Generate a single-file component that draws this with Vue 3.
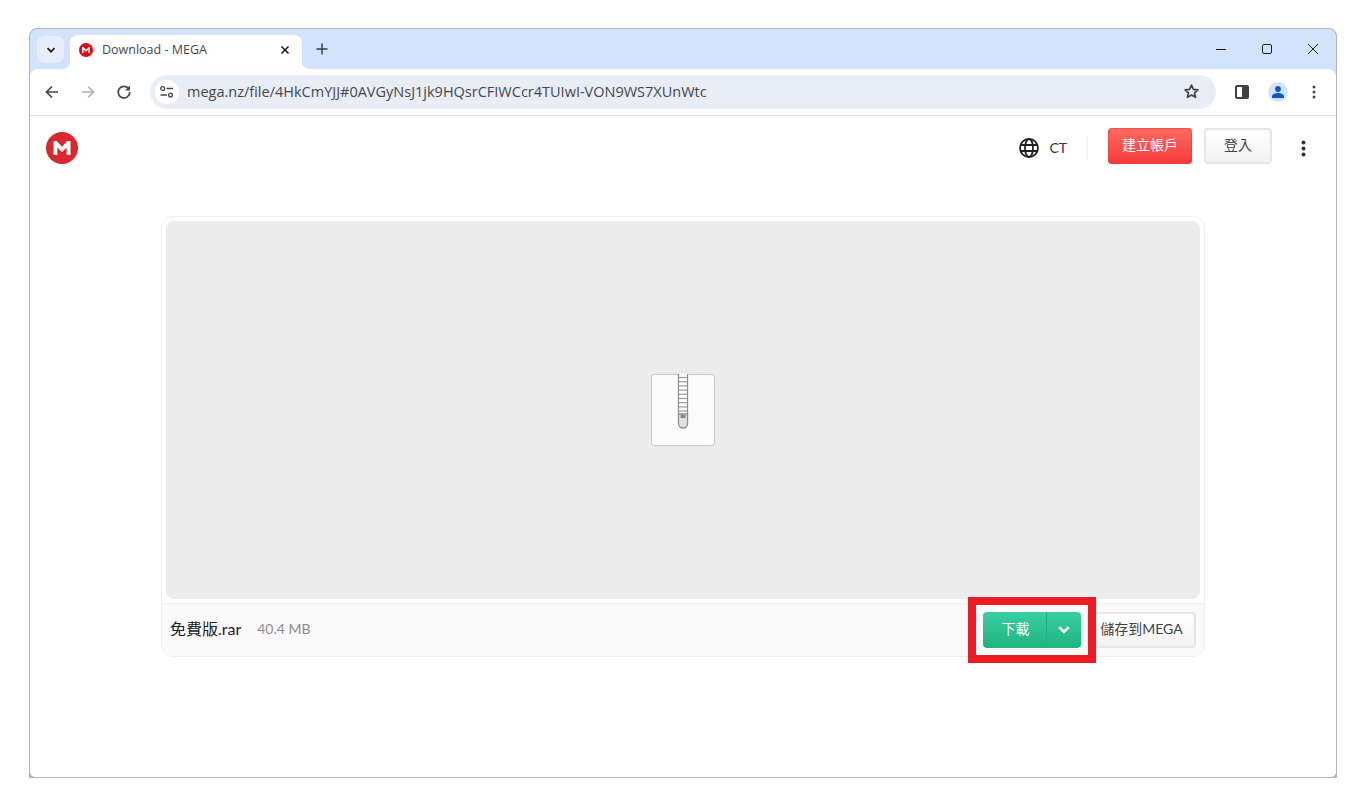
<script setup>
const fileName = '免費版.rar'
const fileSize = '40.4 MB'
const rungs = Array.from({ length: 9 }, (_, i) => 3.5 + i * 4.2)
</script>

<template>
  <div class="page">
    <div class="window">
      <div class="tabstrip">
        <button class="tabsearch">
          <svg width="12" height="12" viewBox="0 0 12 12"><path d="M2.5 4.2 6 7.7l3.5-3.5" fill="none" stroke="#1f1f1f" stroke-width="1.7"/></svg>
        </button>
        <div class="tab">
          <svg class="favicon" width="14" height="14" viewBox="0 0 32 32"><circle cx="16" cy="16" r="16" fill="#e30613"/><path d="M7 23V9h3l6 6.400L22 9h3v14h-3.700v-8l-4.400 4.600h-1.800L10.700 15v8z" fill="#fff"/></svg>
          <span class="tabtitle">Download - MEGA</span>
          <svg class="tabclose" width="10" height="10" viewBox="0 0 10 10"><path d="M1.5 1.5l7 7M8.5 1.5l-7 7" stroke="#1f1f1f" stroke-width="1.6"/></svg>
        </div>
        <svg class="newtab" width="12" height="12" viewBox="0 0 12 12"><path d="M6 .5v11M.5 6h11" stroke="#3c3c3c" stroke-width="1.5"/></svg>
        <div class="wincontrols">
          <svg width="46" height="12" viewBox="0 0 46 12"><path d="M18 6.500h10" stroke="#1f1f1f" stroke-width="1"/></svg>
          <svg width="46" height="12" viewBox="0 0 46 12"><rect x="18.500" y="1.500" width="9" height="9" rx="1.500" fill="none" stroke="#1f1f1f"/></svg>
          <svg width="46" height="12" viewBox="0 0 46 12"><path d="M18 1l10 10M28 1L18 11" stroke="#1f1f1f" stroke-width="1"/></svg>
        </div>
      </div>

      <div class="toolbar-back">
        <div class="toolbar">
          <button class="tool">
            <svg width="16" height="16" viewBox="0 0 16 16"><path d="M14 8H3M8 2.500 2.500 8 8 13.500" fill="none" stroke="#444746" stroke-width="1.700"/></svg>
          </button>
          <button class="tool">
            <svg width="16" height="16" viewBox="0 0 16 16"><path d="M2 8h11M8 2.500 13.500 8 8 13.500" fill="none" stroke="#aeb0b1" stroke-width="1.700"/></svg>
          </button>
          <button class="tool">
            <svg width="16" height="16" viewBox="0 0 16 16"><path d="M13 5.200A5.800 5.800 0 1 0 13.800 8" fill="none" stroke="#444746" stroke-width="1.700"/><path d="M14 1.500v5h-5z" fill="#444746"/></svg>
          </button>
          <div class="omnibox">
            <span class="tune">
              <svg width="16" height="14" viewBox="0 0 16 14"><circle cx="3.700" cy="3.500" r="1.900" fill="none" stroke="#444746" stroke-width="1.300"/><path d="M7.500 3.500H14M1.500 10H8" stroke="#444746" stroke-width="1.500"/><circle cx="11.500" cy="10" r="1.900" fill="none" stroke="#444746" stroke-width="1.300"/></svg>
            </span>
            <span class="url">mega.nz/file/4HkCmYJJ#0AVGyNsJ1jk9HQsrCFIWCcr4TUIwI-VON9WS7XUnWtc</span>
            <svg class="star" width="17" height="17" viewBox="0 0 24 24"><path d="M12 3l2.700 5.900 6.400.7-4.800 4.300 1.400 6.300L12 17l-5.700 3.200 1.400-6.300-4.800-4.300 6.400-.7z" fill="none" stroke="#444746" stroke-width="2.500" stroke-linejoin="round"/></svg>
          </div>
          <button class="tool first-right">
            <svg width="16" height="16" viewBox="0 0 16 16"><rect x="2" y="2" width="12" height="12" rx="1.500" fill="#fff" stroke="#3c4043" stroke-width="2"/><rect x="8" y="1.500" width="6.500" height="13" fill="#3c4043"/></svg>
          </button>
          <button class="tool">
            <span class="avatar">
              <svg width="14" height="14" viewBox="0 0 14 14"><circle cx="7" cy="4" r="2.900" fill="#0b57d0"/><path d="M1 13v-1.500C1 9.300 4 8 7 8s6 1.300 6 3.500V13z" fill="#0b57d0"/></svg>
            </span>
          </button>
          <button class="tool">
            <svg width="4" height="14" viewBox="0 0 4 14"><circle cx="2" cy="2" r="1.500" fill="#444746"/><circle cx="2" cy="7" r="1.500" fill="#444746"/><circle cx="2" cy="12" r="1.500" fill="#444746"/></svg>
          </button>
        </div>
      </div>

      <div class="content">
        <header class="sitebar">
          <svg class="logo" width="32" height="32" viewBox="0 0 32 32"><circle cx="16" cy="16" r="16" fill="#d9272e"/><path d="M7.500 23V9h3.200l5.300 5.800L21.300 9h3.200v14h-3.900v-7.600L16.800 19.500h-1.600l-3.800-4.100V23z" fill="#fff"/></svg>
          <div class="spacer"></div>
          <svg class="globe" width="22" height="22" viewBox="0 0 22 22" fill="none" stroke="#222" stroke-width="1.800"><circle cx="11" cy="11" r="9"/><ellipse cx="11" cy="11" rx="4" ry="9"/><path d="M2.500 8h17M2.500 14h17"/></svg>
          <span class="lang">CT</span>
          <span class="vsep"></span>
          <button class="btn red">建立帳戶</button>
          <button class="btn plain login">登入</button>
          <svg class="sitemenu" width="5" height="17" viewBox="0 0 5 17"><circle cx="2.500" cy="2.500" r="2" fill="#333"/><circle cx="2.500" cy="8.500" r="2" fill="#333"/><circle cx="2.500" cy="14.500" r="2" fill="#333"/></svg>
        </header>

        <main class="card">
          <div class="preview">
            <svg width="64" height="72" viewBox="0 0 64 72">
              <rect x=".5" y=".5" width="63" height="71" rx="3" fill="#fbfbfb" stroke="#c8c8c8"/>
              <rect x="27.500" y="-2" width="9" height="44" fill="#fff" stroke="#8e8e8e" stroke-width="1.200"/>
              <path v-for="y in rungs" :key="y" :d="`M28 ${y}h8`" stroke="#9a9a9a" stroke-width="1.200"/>
              <path d="M27.500 40v9.500a4.500 4.500 0 0 0 9 0V40z" fill="#e2e2e2" stroke="#8e8e8e" stroke-width="1.300"/>
              <rect x="29.500" y="41" width="5" height="3" fill="#8a8a8a"/>
            </svg>
          </div>
          <div class="filebar">
            <span class="name">{{ fileName }}</span>
            <span class="size">{{ fileSize }}</span>
            <div class="spacer"></div>
            <div class="download">
              <span class="dl-label">下載</span>
              <span class="dl-arrow">
                <svg width="12" height="8" viewBox="0 0 12 8"><path d="M1.200 1.200 6 6l4.800-4.800" fill="none" stroke="#fff" stroke-width="2.500"/></svg>
              </span>
            </div>
            <button class="btn plain save">儲存到MEGA</button>
          </div>
        </main>
      </div>
    </div>
    <div class="highlight"></div>
  </div>
</template>

<style>
html, body { margin: 0; background: #fff; }
</style>

<style scoped>
.page {
  position: relative;
  width: 1366px;
  height: 806px;
  padding: 28px 29px;
  box-sizing: border-box;
  overflow: hidden;
}
.window {
  height: 750px;
  box-sizing: border-box;
  border: 1px solid #b4b4b4;
  border-radius: 8px 8px 0 0;
  background: #b4b4b4;
  display: flex;
  flex-direction: column;
  overflow: hidden;
}
button {
  border: 0;
  background: none;
  padding: 0;
  margin: 0;
  font: inherit;
}
.tabstrip {
  height: 40px;
  flex: none;
  background: #d3e3fd;
  display: flex;
  align-items: flex-end;
  padding-left: 7px;
}
.tabsearch {
  width: 27px;
  height: 27px;
  margin-bottom: 6px;
  border-radius: 8px;
  background: #e6eefb;
  display: flex;
  align-items: center;
  justify-content: center;
}
.tab {
  width: 232px;
  height: 34px;
  margin-left: 6px;
  background: #fff;
  border-radius: 8px 8px 0 0;
  display: flex;
  align-items: center;
  box-sizing: border-box;
  padding: 0 12px 5px 9px;
  position: relative;
}
.tab::before,
.tab::after {
  content: "";
  position: absolute;
  bottom: 0;
  width: 8px;
  height: 8px;
}
.tab::before {
  left: -8px;
  background: radial-gradient(circle at 0 0, #d3e3fd 8px, #fff 8.5px);
}
.tab::after {
  right: -8px;
  background: radial-gradient(circle at 100% 0, #d3e3fd 8px, #fff 8.5px);
}
.favicon { flex: none; }
.tabtitle {
  margin-left: 9px;
  flex: 1;
  font: 12.5px/16px "Open Sans", "Noto Sans", sans-serif;
  color: #45484c;
}
.tabclose { flex: none; }
.newtab { margin: 0 0 14px 14px; flex: none; }
.wincontrols {
  margin-left: auto;
  display: flex;
  align-self: flex-start;
  padding-top: 14px;
}
.toolbar-back {
  flex: none;
  background: #d3e3fd;
}
.toolbar {
  height: 47px;
  box-sizing: border-box;
  background: #fff;
  border-bottom: 1px solid #e1e3e6;
  border-radius: 8px 8px 0 0;
  display: flex;
  align-items: center;
  padding: 0 4px 1px;
}
.tool {
  width: 36px;
  height: 34px;
  flex: none;
  display: flex;
  align-items: center;
  justify-content: center;
}
.first-right { margin-left: 8px; }
.omnibox {
  flex: 1;
  height: 34px;
  margin-left: 8px;
  border-radius: 17px;
  background: #e9edf6;
  display: flex;
  align-items: center;
  padding: 0 16px 0 5px;
  min-width: 0;
}
.tune {
  width: 24px;
  height: 24px;
  flex: none;
  border-radius: 50%;
  background: #fff;
  display: flex;
  align-items: center;
  justify-content: center;
}
.url {
  margin-left: 8px;
  flex: 1;
  font: 14.5px/20px "Open Sans", "Noto Sans", sans-serif;
  color: #45484c;
  white-space: nowrap;
}
.star { flex: none; }
.avatar {
  width: 20px;
  height: 20px;
  border-radius: 50%;
  background: #d3e3fd;
  display: flex;
  align-items: flex-end;
  justify-content: center;
  padding-bottom: 3px;
  box-sizing: border-box;
}
.content {
  flex: 1;
  background: #fff;
  border-radius: 0 0 5px 5px;
  display: flex;
  flex-direction: column;
  min-height: 0;
}
.sitebar {
  height: 36px;
  margin-top: 12px;
  flex: none;
  display: flex;
  align-items: center;
  padding: 0 30px 0 16px;
}
.logo { flex: none; margin-top: 4px; }
.spacer { flex: 1; }
.globe { flex: none; margin-top: 4px; }
.lang {
  margin: 4px 0 0 9px;
  font: 14px/20px Lato, sans-serif;
  color: #333;
}
.vsep {
  width: 1px;
  height: 24px;
  margin: 4px 20px 0 20px;
  background: #eee;
}
.btn {
  height: 36px;
  border-radius: 4px;
  box-sizing: border-box;
  padding-bottom: 2px;
  font: 14px/32px Lato, "Noto Sans CJK TC", sans-serif;
  display: flex;
  align-items: center;
  justify-content: center;
  white-space: nowrap;
}
.red {
  width: 84px;
  color: #fff;
  background: linear-gradient(#ff6b63, #f53a3a);
  box-shadow: inset 0 0 0 1px rgba(240, 60, 60, .6);
}
.plain {
  color: #444;
  background: linear-gradient(#fff, #f2f2f2);
  border: 2px solid #e6e6e6;
}
.login { width: 68px; margin-left: 12px; }
.sitemenu { margin: 4px 0 0 29px; flex: none; }
.card {
  width: 1044px;
  height: 441px;
  margin: 52px auto 0;
  box-sizing: border-box;
  border: 1px solid #efefef;
  border-radius: 12px;
  display: flex;
  flex-direction: column;
  overflow: hidden;
}
.preview {
  height: 378px;
  margin: 4px;
  flex: none;
  background: #ececec;
  border-radius: 8px;
  display: flex;
  align-items: center;
  justify-content: center;
}
.filebar {
  flex: 1;
  background: #fafafa;
  border-top: 1px solid #f0f0f0;
  display: flex;
  align-items: center;
  padding: 0 8px 2px;
}
.name {
  font: 16px/20px Lato, "Noto Sans CJK TC", sans-serif;
  color: #222;
}
.size {
  margin-left: 16px;
  font: 14px/20px Lato, sans-serif;
  color: #8c8c8c;
}
.download {
  width: 98px;
  height: 36px;
  margin-top: 2px;
  flex: none;
  border-radius: 4px;
  background: linear-gradient(#39cfa2, #1fb37e);
  display: flex;
  color: #fff;
  margin-right: 6px;
}
.dl-label {
  width: 61px;
  padding-left: 2px;
  border-right: 1px solid #26ad80;
  text-align: center;
  font: 14px/34px Lato, "Noto Sans CJK TC", sans-serif;
}
.dl-arrow {
  flex: 1;
  display: flex;
  align-items: center;
  justify-content: center;
  padding-right: 1px;
}
.save { width: 109px; flex: none; margin-top: 2px; }
.highlight {
  position: absolute;
  left: 968px;
  top: 597px;
  width: 128px;
  height: 66px;
  box-sizing: border-box;
  border: 8px solid #ed1c24;
  pointer-events: none;
}
</style>
